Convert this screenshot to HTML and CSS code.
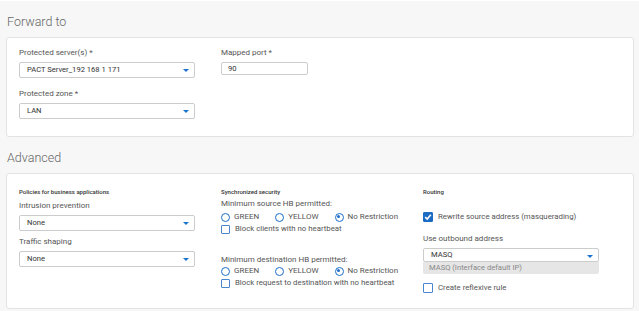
FILE: index.html
```html
<!DOCTYPE html>
<html lang="en">
<head>
    <meta charset="UTF-8">
    <meta name="viewport" content="width=device-width, initial-scale=1.0">
    <title>Forward to</title>
    <link rel="stylesheet" href="styles.css">
</head>
<body>
    <div id="page">
        <!-- Forward to -->
        <h2 class="section-title">Forward to</h2>
        <div class="card card-forward">
            <div class="col">
                <div class="field">
                    <label class="label">Protected server(s) *</label>
                    <div class="select"><span>PACT Server_192 168 1 171</span><i class="arrow"></i></div>
                </div>
                <div class="field">
                    <label class="label">Protected zone *</label>
                    <div class="select"><span>LAN</span><i class="arrow"></i></div>
                </div>
            </div>
            <div class="col">
                <div class="field">
                    <label class="label">Mapped port *</label>
                    <div class="input">90</div>
                </div>
            </div>
        </div>

        <!-- Advanced -->
        <h2 class="section-title">Advanced</h2>
        <div class="card card-advanced">
            <div class="col">
                <div class="group-title">Policies for business applications</div>
                <label class="label label-first">Intrusion prevention</label>
                <div class="select"><span>None</span><i class="arrow"></i></div>
                <label class="label label-gap">Traffic shaping</label>
                <div class="select"><span>None</span><i class="arrow"></i></div>
            </div>
            <div class="col">
                <div class="group-title">Synchronized security</div>
                <div class="label">Minimum source HB permitted:</div>
                <div class="radios">
                    <span class="radio"><i class="circle"></i>GREEN</span>
                    <span class="radio"><i class="circle"></i>YELLOW</span>
                    <span class="radio"><i class="circle checked"></i>No Restriction</span>
                </div>
                <div class="check"><i class="box"></i>Block clients with no heartbeat</div>

                <div class="label label-dest">Minimum destination HB permitted:</div>
                <div class="radios">
                    <span class="radio"><i class="circle"></i>GREEN</span>
                    <span class="radio"><i class="circle"></i>YELLOW</span>
                    <span class="radio"><i class="circle checked"></i>No Restriction</span>
                </div>
                <div class="check"><i class="box"></i>Block request to destination with no heartbeat</div>
            </div>
            <div class="col col-routing">
                <div class="group-title">Routing</div>
                <div class="check check-big"><i class="box box-big checked">
                    <svg width="8" height="8" viewBox="0 0 8 8"><path d="M1.2 4.2 L3.2 6 L6.8 1.8" fill="none" stroke="#fff" stroke-width="1.6"/></svg>
                </i>Rewrite source address (masquerading)</div>
                <div class="label label-outbound">Use outbound address</div>
                <div class="select select-wide"><span>MASQ</span><i class="arrow"></i></div>
                <div class="option">MASQ (Interface default IP)</div>
                <div class="check check-big check-reflexive"><i class="box box-big"></i>Create reflexive rule</div>
            </div>
        </div>
    </div>
</body>
</html>
```

FILE: styles.css
```css
/* styles.css */
body {
margin: 0;
background-color: #f7f7f7;
font-family: Roboto, "Liberation Sans", sans-serif;
color: #555;
}

#page {
border-top: 1px solid #fff;
padding: 0 5px 0 6px;
}

.section-title {
margin: 11px 0 6px 1px;
font-size: 12.5px;
line-height: 19px;
font-weight: 300;
color: #666;
}

.card {
background-color: white;
border: 1px solid #e3e3e3;
border-radius: 3px;
display: grid;
grid-template-columns: 202px 202px 1fr;
padding: 10px 12px 17px 12px;
}

.field + .field {
margin-top: 11px;
}

.label {
display: block;
font-size: 8px;
line-height: 10px;
color: #555;
margin-bottom: 4px;
}

.select {
position: relative;
width: 176px;
height: 16px;
box-sizing: border-box;
border: 1px solid #ccc;
border-radius: 2px;
padding-left: 7px;
font-size: 7.6px;
line-height: 14px;
color: #333;
}

.arrow {
position: absolute;
right: 5px;
top: 6px;
width: 0;
height: 0;
border-left: 3px solid transparent;
border-right: 3px solid transparent;
border-top: 3px solid #1b73d0;
}

.input {
width: 87px;
height: 13px;
box-sizing: border-box;
border: 1px solid #ccc;
border-radius: 2px;
padding-left: 6px;
font-size: 7.6px;
line-height: 11px;
color: #333;
}

.card-advanced {
padding-top: 14px;
padding-bottom: 14px;
height: 136px;
box-sizing: border-box;
}

.group-title {
font-size: 6px;
line-height: 8px;
font-weight: 500;
color: #333;
margin-bottom: 3px;
}

.label-first {
margin-top: 5px;
}

.label-gap {
margin-top: 6px;
}

.radios {
display: flex;
gap: 16px;
font-size: 8px;
line-height: 12px;
margin-top: -2px;
}

.radio {
display: flex;
align-items: center;
gap: 4px;
}

.circle {
width: 9px;
height: 9px;
box-sizing: border-box;
border: 1.5px solid #1b6fc8;
border-radius: 50%;
position: relative;
}

.circle.checked::after {
content: "";
position: absolute;
left: 1.5px;
top: 1.5px;
width: 3px;
height: 3px;
border-radius: 50%;
background-color: #1b6fc8;
}

.check {
display: flex;
align-items: center;
gap: 5px;
font-size: 7.8px;
line-height: 12px;
}

.box {
width: 9px;
height: 9px;
box-sizing: border-box;
border: 1px solid #4a86cf;
border-radius: 1px;
}

.label-dest {
margin-top: 20px;
margin-bottom: 2px;
}

.check-big {
margin-top: 15px;
gap: 5px;
}

.box-big {
width: 10px;
height: 10px;
display: flex;
align-items: center;
justify-content: center;
}

.box-big.checked {
background-color: #1d6cc4;
border-color: #1d6cc4;
}

.label-outbound {
margin-top: 11px;
margin-bottom: 4px;
}

.select-wide {
width: 176px;
height: 14px;
line-height: 12px;
}

.option {
width: 176px;
height: 12px;
box-sizing: border-box;
background-color: #e6e6e6;
border-radius: 0 0 2px 2px;
padding-left: 6px;
font-size: 7.6px;
line-height: 12px;
color: #888;
}

.check-reflexive {
margin-top: 8px;
}
```
